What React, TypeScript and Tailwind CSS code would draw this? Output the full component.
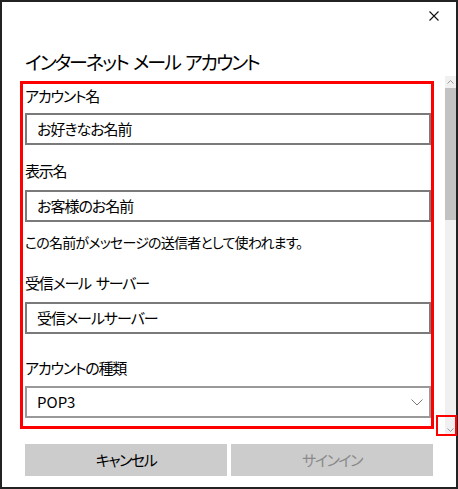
import React from 'react';

const Label: React.FC<{ text: string; className?: string }> = ({ text, className }) => (
  <div className={`flex gap-[5px] text-[15px] leading-[20px] tracking-[-1.2px] text-black ${className ?? ''}`}>
    {text.split(' ').map((w, i) => (
      <span key={i}>{w}</span>
    ))}
  </div>
);

const TextBox: React.FC<{ value: string; className?: string }> = ({ value, className }) => (
  <div
    className={`h-[32px] w-full border-2 border-[#7a7a7a] bg-white pl-[10px] flex items-center text-[15px] tracking-[-1px] text-black ${className ?? ''}`}
  >
    {value}
  </div>
);

const Chevron: React.FC<{ up?: boolean; className?: string }> = ({ up, className }) => (
  <svg width="7" height="4" viewBox="0 0 7 4" className={className}>
    <path
      d={up ? 'M0.5 3.5 L3.5 0.5 L6.5 3.5' : 'M0.5 0.5 L3.5 3.5 L6.5 0.5'}
      fill="none"
      stroke="#9a9a9a"
      strokeWidth="1"
    />
  </svg>
);

export default function App() {
  return (
    <div className="w-[458px] h-[489px] border-2 border-[#222] bg-white flex flex-col font-['Noto_Sans_CJK_JP','Noto_Sans',sans-serif] [font-feature-settings:'palt']">
      {/* close */}
      <div className="flex justify-end pt-[9px] pr-[17px]">
        <svg width="10" height="10" viewBox="0 0 10 10">
          <path d="M0.5 0.5 L9.5 9.5 M9.5 0.5 L0.5 9.5" stroke="#111" strokeWidth="1.1" />
        </svg>
      </div>

      <h1 className="mt-[28px] pl-[23px] flex gap-[5px] text-[19px] leading-[26px] tracking-[-2px] font-normal text-black">
        <span>インターネット</span>
        <span>メール</span>
        <span>アカウント</span>
      </h1>

      <div className="mt-[1px] h-[360px] flex">
        <div className="pl-[18px] pt-[5px]">
          <div className="w-[414px] h-[348px] border-[3px] border-[#f00] pl-[2px] pt-[2px] overflow-hidden">
            <Label text="アカウント名" />
            <TextBox value="お好きなお名前" className="mt-[7px]" />

            <Label text="表示名" className="mt-[16px]" />
            <TextBox value="お客様のお名前" className="mt-[9px]" />
            <div className="mt-[10px] text-[14px] leading-[20px] tracking-[-0.8px] text-black">
              この名前がメッセージの送信者として使われます。
            </div>

            <Label text="受信メール サーバー" className="mt-[21px]" />
            <TextBox value="受信メールサーバー" className="mt-[9px]" />

            <Label text="アカウントの種類" className="mt-[24px]" />
            <div className="mt-[8px] h-[32px] w-full border-2 border-[#999] pl-[10px] pr-[6px] flex items-center justify-between text-[15px] text-black">
              <span>POP3</span>
              <svg width="12" height="7" viewBox="0 0 12 7">
                <path d="M0.5 0.5 L6 6 L11.5 0.5" fill="none" stroke="#777" strokeWidth="1" />
              </svg>
            </div>
          </div>
        </div>

        {/* scrollbar */}
        <div className="relative ml-[11px] w-[11px] h-full flex flex-col bg-[#f0f0f0]">
          <div className="h-[12px] flex items-center justify-center">
            <Chevron up />
          </div>
          <div className="h-[132px] bg-[#c2c2c2]" />
          <div className="flex-1" />
          <div className="h-[12px] flex items-center justify-center">
            <Chevron />
          </div>
          <div className="absolute left-[-9px] top-[339px] w-[21px] h-[21px] border-2 border-[#f00]" />
        </div>
      </div>

      <div className="mt-[8px] pl-[23px] flex gap-[4px]">
        <button className="w-[202px] h-[32px] bg-[#cccccc] text-[15px] tracking-[-1.5px] text-black">キャンセル</button>
        <button className="w-[202px] h-[32px] bg-[#cccccc] text-[15px] tracking-[-1.5px] text-[#8a8a8a]">サインイン</button>
      </div>
    </div>
  );
}
